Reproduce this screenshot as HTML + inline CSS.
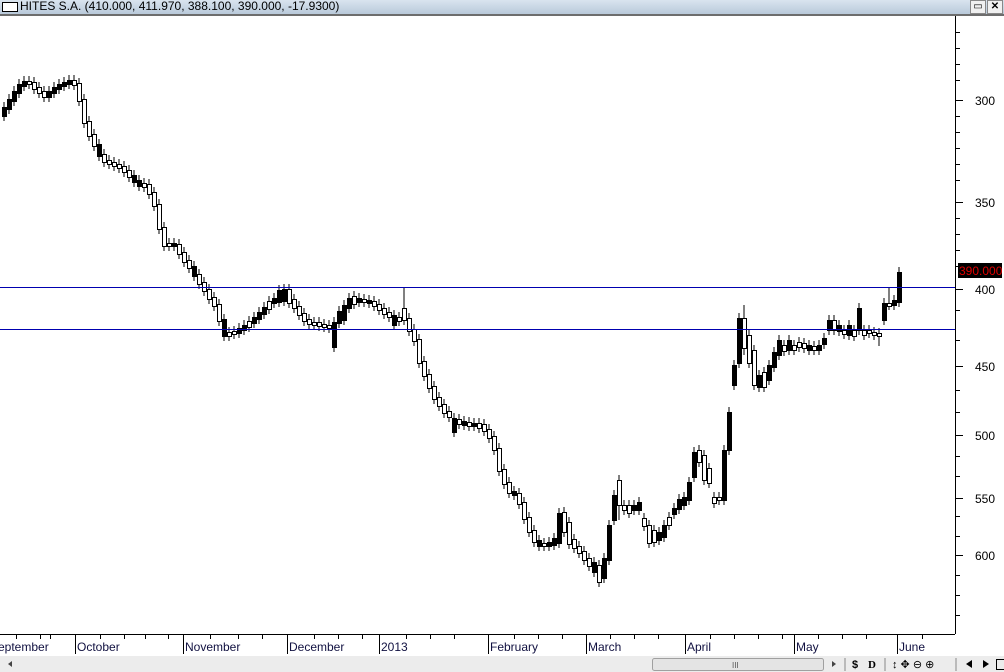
<!DOCTYPE html>
<html><head><meta charset="utf-8"><style>
html,body{margin:0;padding:0;width:1004px;height:672px;overflow:hidden;background:#fff;font-family:"Liberation Sans",sans-serif}
#title{position:absolute;left:0;top:0;width:1004px;height:14px;background:linear-gradient(#d9e4ef,#b9c9da);border-bottom:2px solid #6d6d6d;font-size:12px;line-height:13px;color:#000}
#title .box{position:absolute;left:2px;top:2px;width:14px;height:8px;border:1px solid #000;background:#fff}
#title .t{position:absolute;left:20px;top:0}
.wb{position:absolute;top:0;width:14px;height:12px;border:1px solid #888;background:#f0f0f0;font-size:10px;line-height:12px;text-align:center}
#bar{position:absolute;left:0;top:656px;width:1004px;height:16px;background:#ececec}
svg{position:absolute;left:0;top:0}
.w{fill:#fff;stroke:#000}.b{fill:#000;stroke:#000}
</style></head><body>
<div id="title"><div class="box"></div><span class="t">HITES S.A. (410.000, 411.970, 388.100, 390.000, -17.9300)</span>
<div class="wb" style="left:970px">▭</div><div class="wb" style="left:987px;font-weight:bold">✕</div></div>
<div id="bar"></div>
<svg width="1004" height="672" xmlns="http://www.w3.org/2000/svg">
<path stroke="#000" fill="none" d="M4 102v19M9 94v20M14 86v20M19 79v19M24 76v15M29 76v13M34 77v17M39 82v16M44 86v16M49 86v16M54 82v16M59 79v15M64 77v14M69 75v14M74 75v15M79 78v28M84 94v34M89 116v25M94 129v22M99 139v22M104 149v18M109 155v14M114 157v14M119 159v14M124 161v16M129 165v17M134 170v17M139 175v16M144 178v14M149 179v20M154 187v24M159 199v35M164 222v29M169 238v13M174 238v13M179 239v20M184 247v20M189 255v18M194 261v20M199 269v20M204 277v19M209 284v20M214 292v19M219 299v27M224 314v27M229 327v14M234 326v13M239 323v15M244 320v15M249 316v16M254 312v16M259 307v17M264 302v17M269 296v18M274 293v15M279 285v22M284 284v22M289 284v24M294 294v19M299 301v19M304 308v18M309 314v15M314 317v13M319 317v14M324 319v13M329 320v13M334 317v35M339 306v22M344 300v25M349 293v20M354 291v18M359 293v14M364 294v13M369 295v13M374 296v15M379 299v16M384 303v16M389 307v15M394 310v20M399 312v14M404 288v37M409 313v23M414 324v22M419 334v34M424 356v25M429 369v24M434 381v23M439 392v19M444 399v19M449 406v16M454 413v24M459 414v15M464 416v14M469 417v14M474 418v13M479 418v15M484 419v17M489 424v19M494 431v24M499 443v33M504 464v25M509 477v21M514 486v14M519 488v21M524 497v27M529 512v25M534 525v22M539 535v16M544 538v13M549 537v14M554 533v17M559 508v40M564 507v30M569 517v32M574 534v19M579 541v17M584 546v19M589 553v18M594 557v20M599 560v27M604 553v30M609 520v45M614 490v35M619 475v45M624 500v15M629 500v18M634 500v15M639 497v18M644 513v18M649 520v28M654 525v22M659 527v18M664 520v22M669 512v18M674 503v16M679 494v20M684 492v18M689 477v28M694 447v35M699 445v22M704 450v35M709 463v25M714 492v16M719 492v13M724 445v60M729 407v48M734 360v30M739 313v55M744 305v50M749 330v38M754 345v45M759 370v22M764 367v25M769 360v25M774 347v25M779 335v25M784 340v16M789 335v20M794 340v15M799 337v15M804 338v15M809 340v15M814 341v14M819 340v15M824 333v16M829 315v20M834 315v20M839 320v16M844 325v14M849 320v20M854 325v16M859 303v32M864 325v15M869 325v13M874 327v13M879 328v18M884 298v27M889 288v22M894 295v15M899 267v40"/>
<g transform="translate(0.5,0.5)">
<rect class="b" x="2" y="107" width="4" height="9"/><rect class="b" x="7" y="99" width="4" height="10"/><rect class="b" x="12" y="91" width="4" height="10"/><rect class="b" x="17" y="84" width="4" height="9"/><rect class="b" x="22" y="81" width="4" height="5"/><rect class="w" x="27" y="81" width="4" height="3"/><rect class="w" x="32" y="82" width="4" height="7"/><rect class="w" x="37" y="87" width="4" height="6"/><rect class="w" x="42" y="91" width="4" height="6"/><rect class="b" x="47" y="91" width="4" height="6"/><rect class="b" x="52" y="87" width="4" height="6"/><rect class="b" x="57" y="84" width="4" height="5"/><rect class="b" x="62" y="82" width="4" height="4"/><rect class="b" x="67" y="80" width="4" height="4"/><rect class="w" x="72" y="80" width="4" height="5"/><rect class="w" x="77" y="83" width="4" height="18"/><rect class="w" x="82" y="99" width="4" height="24"/><rect class="w" x="87" y="121" width="4" height="15"/><rect class="w" x="92" y="134" width="4" height="12"/><rect class="b" x="97" y="144" width="4" height="12"/><rect class="w" x="102" y="154" width="4" height="8"/><rect class="w" x="107" y="160" width="4" height="4"/><rect class="w" x="112" y="162" width="4" height="4"/><rect class="w" x="117" y="164" width="4" height="4"/><rect class="w" x="122" y="166" width="4" height="6"/><rect class="w" x="127" y="170" width="4" height="7"/><rect class="b" x="132" y="175" width="4" height="7"/><rect class="b" x="137" y="180" width="4" height="6"/><rect class="w" x="142" y="183" width="4" height="4"/><rect class="w" x="147" y="184" width="4" height="10"/><rect class="w" x="152" y="192" width="4" height="14"/><rect class="w" x="157" y="204" width="4" height="25"/><rect class="w" x="162" y="227" width="4" height="19"/><rect class="w" x="167" y="243" width="4" height="3"/><rect class="b" x="172" y="243" width="4" height="3"/><rect class="w" x="177" y="244" width="4" height="10"/><rect class="w" x="182" y="252" width="4" height="10"/><rect class="w" x="187" y="260" width="4" height="8"/><rect class="b" x="192" y="266" width="4" height="10"/><rect class="w" x="197" y="274" width="4" height="10"/><rect class="w" x="202" y="282" width="4" height="9"/><rect class="w" x="207" y="289" width="4" height="10"/><rect class="w" x="212" y="297" width="4" height="9"/><rect class="w" x="217" y="304" width="4" height="17"/><rect class="b" x="222" y="319" width="4" height="17"/><rect class="w" x="227" y="332" width="4" height="4"/><rect class="w" x="232" y="331" width="4" height="3"/><rect class="b" x="237" y="328" width="4" height="5"/><rect class="b" x="242" y="325" width="4" height="5"/><rect class="w" x="247" y="321" width="4" height="6"/><rect class="b" x="252" y="317" width="4" height="6"/><rect class="b" x="257" y="312" width="4" height="7"/><rect class="b" x="262" y="307" width="4" height="7"/><rect class="w" x="267" y="301" width="4" height="8"/><rect class="b" x="272" y="298" width="4" height="5"/><rect class="b" x="277" y="290" width="4" height="12"/><rect class="b" x="282" y="289" width="4" height="12"/><rect class="w" x="287" y="289" width="4" height="14"/><rect class="w" x="292" y="299" width="4" height="9"/><rect class="w" x="297" y="306" width="4" height="9"/><rect class="w" x="302" y="313" width="4" height="8"/><rect class="w" x="307" y="319" width="4" height="5"/><rect class="w" x="312" y="322" width="4" height="3"/><rect class="w" x="317" y="322" width="4" height="4"/><rect class="w" x="322" y="324" width="4" height="3"/><rect class="w" x="327" y="325" width="4" height="3"/><rect class="b" x="332" y="322" width="4" height="25"/><rect class="b" x="337" y="311" width="4" height="12"/><rect class="b" x="342" y="305" width="4" height="15"/><rect class="b" x="347" y="298" width="4" height="10"/><rect class="w" x="352" y="296" width="4" height="8"/><rect class="b" x="357" y="298" width="4" height="4"/><rect class="w" x="362" y="299" width="4" height="3"/><rect class="b" x="367" y="300" width="4" height="3"/><rect class="w" x="372" y="301" width="4" height="5"/><rect class="w" x="377" y="304" width="4" height="6"/><rect class="w" x="382" y="308" width="4" height="6"/><rect class="w" x="387" y="312" width="4" height="5"/><rect class="b" x="392" y="315" width="4" height="10"/><rect class="w" x="397" y="317" width="4" height="4"/><rect class="w" x="402" y="308" width="4" height="12"/><rect class="w" x="407" y="318" width="4" height="13"/><rect class="w" x="412" y="329" width="4" height="12"/><rect class="w" x="417" y="339" width="4" height="24"/><rect class="w" x="422" y="361" width="4" height="15"/><rect class="w" x="427" y="374" width="4" height="14"/><rect class="w" x="432" y="386" width="4" height="13"/><rect class="w" x="437" y="397" width="4" height="9"/><rect class="w" x="442" y="404" width="4" height="9"/><rect class="w" x="447" y="411" width="4" height="6"/><rect class="b" x="452" y="418" width="4" height="14"/><rect class="w" x="457" y="419" width="4" height="5"/><rect class="b" x="462" y="421" width="4" height="4"/><rect class="w" x="467" y="422" width="4" height="4"/><rect class="b" x="472" y="423" width="4" height="3"/><rect class="w" x="477" y="423" width="4" height="5"/><rect class="w" x="482" y="424" width="4" height="7"/><rect class="w" x="487" y="429" width="4" height="9"/><rect class="w" x="492" y="436" width="4" height="14"/><rect class="w" x="497" y="448" width="4" height="23"/><rect class="w" x="502" y="469" width="4" height="15"/><rect class="w" x="507" y="482" width="4" height="11"/><rect class="b" x="512" y="491" width="4" height="4"/><rect class="w" x="517" y="493" width="4" height="11"/><rect class="w" x="522" y="502" width="4" height="17"/><rect class="w" x="527" y="517" width="4" height="15"/><rect class="w" x="532" y="530" width="4" height="12"/><rect class="b" x="537" y="540" width="4" height="6"/><rect class="w" x="542" y="543" width="4" height="3"/><rect class="b" x="547" y="542" width="4" height="4"/><rect class="b" x="552" y="538" width="4" height="7"/><rect class="b" x="557" y="513" width="4" height="30"/><rect class="w" x="562" y="512" width="4" height="20"/><rect class="w" x="567" y="522" width="4" height="22"/><rect class="w" x="572" y="539" width="4" height="9"/><rect class="w" x="577" y="546" width="4" height="7"/><rect class="w" x="582" y="551" width="4" height="9"/><rect class="w" x="587" y="558" width="4" height="8"/><rect class="b" x="592" y="562" width="4" height="10"/><rect class="w" x="597" y="565" width="4" height="17"/><rect class="b" x="602" y="558" width="4" height="20"/><rect class="b" x="607" y="525" width="4" height="35"/><rect class="b" x="612" y="495" width="4" height="25"/><rect class="w" x="617" y="480" width="4" height="25"/><rect class="w" x="622" y="505" width="4" height="5"/><rect class="w" x="627" y="505" width="4" height="8"/><rect class="b" x="632" y="505" width="4" height="5"/><rect class="b" x="637" y="502" width="4" height="8"/><rect class="w" x="642" y="518" width="4" height="8"/><rect class="w" x="647" y="525" width="4" height="18"/><rect class="w" x="652" y="530" width="4" height="12"/><rect class="b" x="657" y="532" width="4" height="8"/><rect class="b" x="662" y="525" width="4" height="12"/><rect class="w" x="667" y="517" width="4" height="8"/><rect class="b" x="672" y="508" width="4" height="6"/><rect class="b" x="677" y="499" width="4" height="10"/><rect class="b" x="682" y="497" width="4" height="8"/><rect class="b" x="687" y="482" width="4" height="18"/><rect class="b" x="692" y="452" width="4" height="25"/><rect class="w" x="697" y="450" width="4" height="12"/><rect class="w" x="702" y="455" width="4" height="25"/><rect class="w" x="707" y="468" width="4" height="15"/><rect class="w" x="712" y="497" width="4" height="6"/><rect class="w" x="717" y="497" width="4" height="3"/><rect class="b" x="722" y="450" width="4" height="50"/><rect class="b" x="727" y="412" width="4" height="38"/><rect class="b" x="732" y="365" width="4" height="20"/><rect class="b" x="737" y="318" width="4" height="45"/><rect class="w" x="742" y="318" width="4" height="30"/><rect class="w" x="747" y="335" width="4" height="28"/><rect class="w" x="752" y="350" width="4" height="35"/><rect class="b" x="757" y="375" width="4" height="12"/><rect class="w" x="762" y="372" width="4" height="15"/><rect class="b" x="767" y="365" width="4" height="15"/><rect class="b" x="772" y="352" width="4" height="15"/><rect class="b" x="777" y="340" width="4" height="15"/><rect class="w" x="782" y="345" width="4" height="6"/><rect class="b" x="787" y="340" width="4" height="10"/><rect class="w" x="792" y="345" width="4" height="5"/><rect class="w" x="797" y="342" width="4" height="5"/><rect class="w" x="802" y="343" width="4" height="5"/><rect class="b" x="807" y="345" width="4" height="5"/><rect class="w" x="812" y="346" width="4" height="4"/><rect class="b" x="817" y="345" width="4" height="5"/><rect class="b" x="822" y="338" width="4" height="6"/><rect class="b" x="827" y="320" width="4" height="10"/><rect class="w" x="832" y="320" width="4" height="10"/><rect class="b" x="837" y="325" width="4" height="6"/><rect class="w" x="842" y="330" width="4" height="4"/><rect class="b" x="847" y="325" width="4" height="10"/><rect class="w" x="852" y="330" width="4" height="6"/><rect class="b" x="857" y="308" width="4" height="22"/><rect class="w" x="862" y="330" width="4" height="5"/><rect class="w" x="867" y="330" width="4" height="3"/><rect class="w" x="872" y="332" width="4" height="3"/><rect class="w" x="877" y="333" width="4" height="3"/><rect class="b" x="882" y="303" width="4" height="17"/><rect class="w" x="887" y="303" width="4" height="3"/><rect class="b" x="892" y="300" width="4" height="5"/><rect class="b" x="897" y="272" width="4" height="30"/>
</g>
<line x1="0" y1="287.5" x2="955" y2="287.5" stroke="#0000b0"/><line x1="0" y1="329.5" x2="955" y2="329.5" stroke="#0000b0"/>
<line x1="955.5" y1="16" x2="955.5" y2="634" stroke="#000"/>
<path stroke="#000" d="M955 32.5h5M955 48.5h5M955 64.5h5M955 80.5h5M955 116.5h5M955 132.5h5M955 148.5h5M955 164.5h5M955 180.5h5M955 218.5h5M955 234.5h5M955 250.5h5M955 266.5h5M955 310.5h5M955 340.5h5M955 390.5h5M955 412.5h5M955 456.5h5M955 476.5h5M955 516.5h5M955 536.5h5M955 575.5h5M955 595.5h5M955 615.5h5M955 100.5h8M955 202.5h8M955 289.5h8M955 366.5h8M955 435.5h8M955 498.5h8M955 555.5h8"/>
<g font-size="12" fill="#000"><text x="975" y="105">300</text><text x="975" y="207">350</text><text x="975" y="294">400</text><text x="975" y="371">450</text><text x="975" y="440">500</text><text x="975" y="503">550</text><text x="975" y="560">600</text></g>
<rect x="958" y="263" width="44" height="15" fill="#000"/><text x="959" y="275" font-size="12" fill="#e00000">390.000</text>
<line x1="0" y1="634.5" x2="955" y2="634.5" stroke="#000"/>
<path stroke="#000" d="M16.5 634v5M40.5 634v5M50.5 634v5M100.5 634v5M124.5 634v5M145.5 634v5M168.5 634v5M210.5 634v5M238.5 634v5M262.5 634v5M314.5 634v5M338.5 634v5M362.5 634v5M406.5 634v5M430.5 634v5M454.5 634v5M514.5 634v5M538.5 634v5M562.5 634v5M610.5 634v5M634.5 634v5M658.5 634v5M710.5 634v5M734.5 634v5M758.5 634v5M782.5 634v5M818.5 634v5M842.5 634v5M866.5 634v5M922.5 634v5M75.5 634v20M183.5 634v20M287.5 634v20M379.5 634v20M488.5 634v20M586.5 634v20M685.5 634v20M794.5 634v20M897.5 634v20"/>
<g font-size="12" fill="#101040"><text x="-10" y="651">September</text><text x="77" y="651">October</text><text x="185" y="651">November</text><text x="289" y="651">December</text><text x="381" y="651">2013</text><text x="490" y="651">February</text><text x="588" y="651">March</text><text x="687" y="651">April</text><text x="796" y="651">May</text><text x="899" y="651">June</text></g>
<rect x="652.5" y="658.5" width="171" height="12" rx="2" fill="#e4e4e4" stroke="#a0a0a0"/><text x="732" y="668" font-size="8" fill="#555">III</text>
<polygon points="12,661 8,664 12,667" fill="#444"/><polygon points="832,661 836,664 832,667" fill="#444"/>
<line x1="845" y1="658" x2="845" y2="671" stroke="#888"/>
<text x="852" y="668" font-size="11" font-weight="bold">$</text><text x="868" y="668" font-size="11" font-weight="bold" font-family="Liberation Serif">D</text><line x1="885" y1="658" x2="885" y2="671" stroke="#888"/>
<text x="892" y="668" font-size="11">↕ ✥ ⊖ ⊕</text><line x1="956" y1="658" x2="956" y2="671" stroke="#888"/>
<polygon points="972,660 966,664 972,668" fill="#000"/><polygon points="983,660 989,664 983,668" fill="#000"/><rect x="996.5" y="659.5" width="8" height="10" fill="none" stroke="#000"/>
</svg>
</body></html>
